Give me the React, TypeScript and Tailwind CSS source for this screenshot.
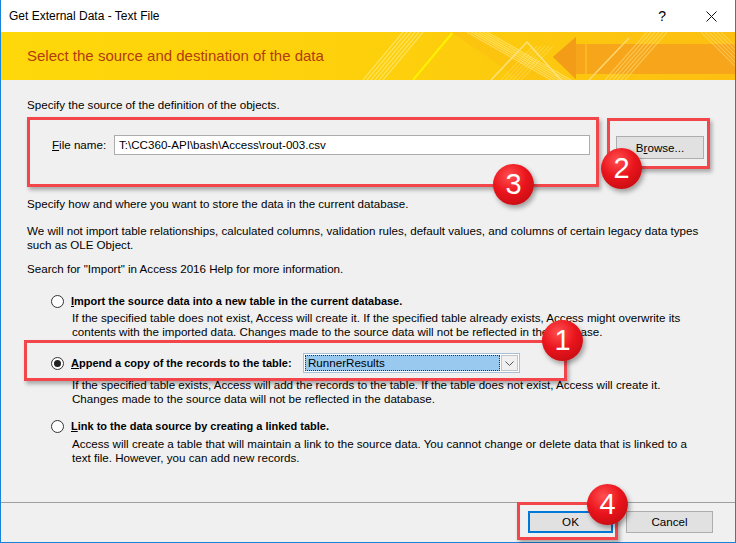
import React from "react";

function Badge({ n, className }: { n: string; className: string }) {
  return (
    <div
      className={`absolute grid h-[41px] w-[41px] place-items-center rounded-full bg-[radial-gradient(circle_at_40%_30%,#ff5050_0%,#ea141c_45%,#b50a0e_100%)] text-[29px] leading-none text-white shadow-[2px_3px_5px_rgba(0,0,0,0.35)] ${className}`}
    >
      <span className="-mt-[1px]">{n}</span>
    </div>
  );
}

function Frame({ className }: { className: string }) {
  return (
    <div
      className={`absolute border-[3px] border-[#f2464b] shadow-[2px_3px_4px_rgba(0,0,0,0.3)] ${className}`}
    />
  );
}

function Radio({ checked }: { checked?: boolean }) {
  return (
    <span className="grid h-[13px] w-[13px] shrink-0 place-items-center rounded-full border border-[#333] bg-white">
      {checked && <span className="h-[7px] w-[7px] rounded-full bg-[#222]" />}
    </span>
  );
}

function Banner() {
  const lines = [0, 4, 8, 12, 16, 20];
  return (
    <div className="relative h-[48px] overflow-hidden bg-[linear-gradient(90deg,#fed80a_0%,#fdcf0c_55%,#fcbf12_100%)]">
      <svg className="absolute inset-0" width="736" height="48" viewBox="0 0 736 48">
        {lines.map((d) => (
          <line key={"a" + d} x1={362 + d} y1={48} x2={402 + d} y2={0} stroke="#fff2a0" strokeOpacity="0.55" strokeWidth="1.2" />
        ))}
        <line x1={412} y1={48} x2={452} y2={0} stroke="#fff200" strokeWidth="2" />
        <polygon points="470,0 560,48 520,48 450,0" fill="#fcc40e" />
        {lines.map((d) => (
          <line key={"b" + d} x1={466 + d} y1={0} x2={550 + d} y2={48} stroke="#fff2a0" strokeOpacity="0.5" strokeWidth="1.2" />
        ))}
        <polyline points="490,48 526,10 560,48" fill="none" stroke="#ffe27a" strokeWidth="1.5" />
        {lines.map((d) => (
          <line key={"c" + d} x1={500 + d} y1={48} x2={532 + d} y2={14} stroke="#fff2a0" strokeOpacity="0.4" strokeWidth="1" />
        ))}
        <polygon points="552,25 575,5 575,12 736,12 736,42 575,42 575,47" fill="#f7a51b" />
        <polygon points="552,25 575,5 575,47" fill="#f39c17" />
        <line x1={585} y1={12} x2={585} y2={42} stroke="#fbb820" strokeWidth="2" />
        {lines.map((d) => (
          <line key={"d" + d} x1={604 + d} y1={48} x2={646 + d} y2={0} stroke="#ffe07a" strokeOpacity="0.55" strokeWidth="1.2" />
        ))}
        <line x1={588} y1={48} x2={628} y2={6} stroke="#ffd870" strokeWidth="1.5" />
        {lines.map((d) => (
          <line key={"e" + d} x1={700 + d} y1={0} x2={748 + d} y2={48} stroke="#ffe07a" strokeOpacity="0.5" strokeWidth="1.2" />
        ))}
      </svg>
      <div className="relative pl-[26px] pt-[14px] text-[15px] leading-[20px] text-[#b23c10]">
        Select the source and destination of the data
      </div>
    </div>
  );
}

export default function App() {
  return (
    <div className="relative flex h-[543px] w-[736px] flex-col border-x border-b border-[#1883d7] bg-[#f0f0f0] font-['Liberation_Sans',Arial,sans-serif] text-[11.6px] text-black">
      {/* title bar */}
      <div className="flex h-[32px] items-center bg-white pl-[8px]">
        <span className="text-[12px]">Get External Data - Text File</span>
        <span className="ml-auto mr-[40px] text-[14px]">?</span>
        <svg width="11" height="11" viewBox="0 0 11 11" className="mr-[18px]">
          <path d="M0.5 0.5 L10.5 10.5 M10.5 0.5 L0.5 10.5" stroke="#111" strokeWidth="1" />
        </svg>
      </div>
      <Banner />

      <div className="flex-1 whitespace-nowrap px-[26px] leading-[14px]">
        <p className="mt-[18px]">Specify the source of the definition of the objects.</p>

        <div className="mt-[23px] flex items-start pl-[25px]">
          <span className="w-[62px] pt-[3px]">
            <u>F</u>ile name:
          </span>
          <div className="flex h-[20px] w-[476px] items-center border border-[#acacac] bg-white pl-[4px]">
            T:\CC360-API\bash\Access\rout-003.csv
          </div>
          <button className="ml-[26px] mt-[1px] h-[23px] w-[88px] border border-[#adadad] bg-[#e1e1e1]">
            B<u>r</u>owse...
          </button>
        </div>

        <p className="mt-[38px]">Specify how and where you want to store the data in the current database.</p>
        <p className="mt-[13px]">
          We will not import table relationships, calculated columns, validation rules, default values, and columns of certain legacy data types
          <br />
          such as OLE Object.
        </p>
        <p className="mt-[10px]">Search for "Import" in Access 2016 Help for more information.</p>

        <div className="mt-[18px] flex items-center pl-[24px]">
          <Radio />
          <span className="ml-[7px] text-[11px] font-bold">
            <u>I</u>mport the source data into a new table in the current database.
          </span>
        </div>
        <p className="mt-[3px] pl-[45px]">
          If the specified table does not exist, Access will create it. If the specified table already exists, Access might overwrite its
          <br />
          contents with the imported data. Changes made to the source data will not be reflected in the database.
        </p>

        <div className="mt-[14px] flex h-[20px] items-center pl-[24px]">
          <Radio checked />
          <span className="ml-[7px] w-[232px] text-[11px] font-bold">
            <u>A</u>ppend a copy of the records to the table:
          </span>
          <div className="flex h-[20px] w-[217px] items-stretch border border-[#a9bfd6] bg-white p-[1px]">
            <div className="flex flex-1 items-center border border-dotted border-[#333] bg-[#99c9ef] pl-[2px]">
              RunnerResults
            </div>
            <div className="ml-[1px] grid w-[17px] place-items-center border border-[#c4c4c4] bg-[#f0f0f0]">
              <svg width="9" height="5" viewBox="0 0 9 5">
                <path d="M0.5 0.5 L4.5 4.5 L8.5 0.5" fill="none" stroke="#555" strokeWidth="1" />
              </svg>
            </div>
          </div>
        </div>
        <p className="mt-[5px] pl-[45px]">
          If the specified table exists, Access will add the records to the table. If the table does not exist, Access will create it.
          <br />
          Changes made to the source data will not be reflected in the database.
        </p>

        <div className="mt-[13px] flex items-center pl-[24px]">
          <Radio />
          <span className="ml-[7px] text-[11px] font-bold">
            <u>L</u>ink to the data source by creating a linked table.
          </span>
        </div>
        <p className="mt-[4px] pl-[45px]">
          Access will create a table that will maintain a link to the source data. You cannot change or delete data that is linked to a
          <br />
          text file. However, you can add new records.
        </p>
      </div>

      <div className="flex h-[40px] justify-end gap-[13px] border-t border-[#a0a0a0] pr-[22px] pt-[8px]">
        <button className="h-[22px] w-[85px] border-2 border-[#0078d7] bg-[#e1e1e1]">OK</button>
        <button className="h-[22px] w-[87px] border border-[#adadad] bg-[#e1e1e1]">Cancel</button>
      </div>

      {/* annotations */}
      <Frame className="left-[26px] top-[117px] h-[70px] w-[572px]" />
      <Frame className="left-[606px] top-[118px] h-[51px] w-[103px]" />
      <Frame className="left-[23px] top-[340px] h-[41px] w-[543px]" />
      <Frame className="left-[516px] top-[502px] h-[38px] w-[101px]" />
      <Badge n="3" className="left-[492px] top-[164px]" />
      <Badge n="2" className="left-[600px] top-[148px]" />
      <Badge n="1" className="left-[541px] top-[320px]" />
      <Badge n="4" className="left-[586px] top-[484px]" />
    </div>
  );
}
